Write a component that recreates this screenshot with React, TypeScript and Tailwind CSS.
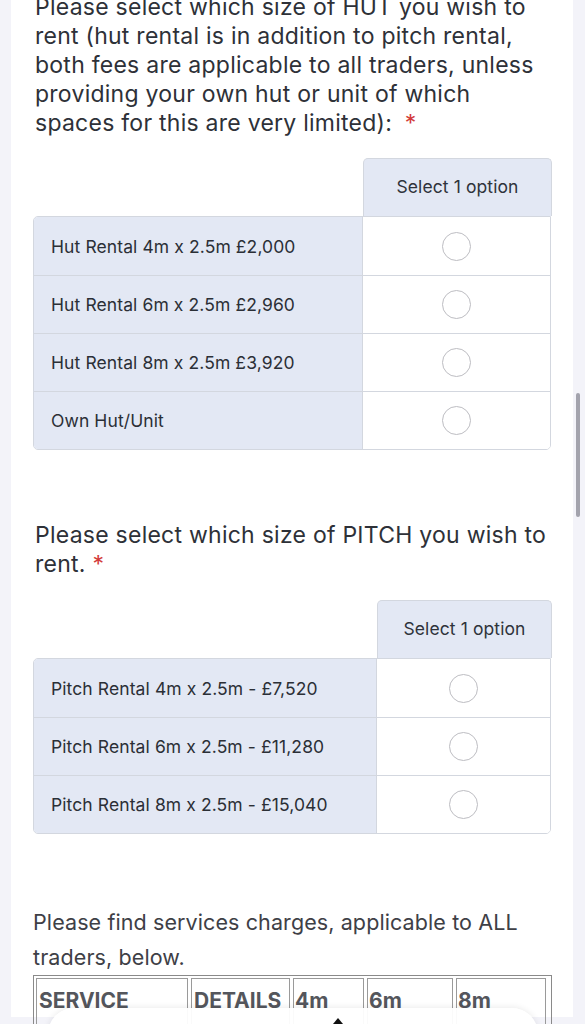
import React from "react";

const font = { fontFamily: "Inter, 'Noto Sans', sans-serif" };

function Radio() {
  return <div className="w-[29px] h-[29px] rounded-full border-[1.5px] border-[#bdbdc2] bg-white" />;
}

function OptionTable({ left, right, rows }: { left: number; right: number; rows: string[] }) {
  return (
    <div className="flex flex-col">
      <div className="flex">
        <div style={{ width: left }} className="shrink-0" />
        <div
          style={{ width: right }}
          className="h-[58px] shrink-0 bg-[#e3e8f4] border border-b-0 border-[#d3d7df] rounded-t-[5px] flex items-center justify-center text-[17.5px] tracking-[0.1px] text-[#2f333b]"
        >
          Select 1 option
        </div>
      </div>
      <div className="border border-[#d3d7df] rounded-[5px] rounded-tr-none overflow-hidden">
        {rows.map((r, i) => (
          <div key={i} className={`flex h-[58px] ${i > 0 ? "border-t border-[#d3d7df]" : ""}`}>
            <div
              style={{ width: left - 1 }}
              className="shrink-0 bg-[#e3e8f4] border-r border-[#d3d7df] flex items-center pl-[17px] pt-[2px] text-[17.5px] tracking-[0.1px] text-[#2b2f36]"
            >
              {r}
            </div>
            <div className="flex-1 flex items-center justify-center bg-white">
              <Radio />
            </div>
          </div>
        ))}
      </div>
    </div>
  );
}

export default function App() {
  return (
    <div style={font} className="relative w-[585px] h-[1024px] overflow-hidden bg-[#f3f3f9]">
      <div className="mx-[11px] w-[562px] h-full bg-white px-[22px]">
        <div className="mt-[-7px] pl-[2px] pr-[2px] text-[23px] leading-[29px] text-[#2e3138] tracking-[0.25px]">
          Please select which size of HUT you wish to rent (hut rental is in addition to pitch rental, both fees are
          applicable to all traders, unless providing your own hut or unit of which spaces for this are very limited):{" "}
          <span className="text-[#d33b3b] ml-[6px]">*</span>
        </div>
        <div className="mt-[20px]">
          <OptionTable
            left={330}
            right={189}
            rows={[
              "Hut Rental 4m x 2.5m £2,000",
              "Hut Rental 6m x 2.5m £2,960",
              "Hut Rental 8m x 2.5m £3,920",
              "Own Hut/Unit",
            ]}
          />
        </div>
        <div className="mt-[71px] pl-[2px] pr-[2px] text-[23px] leading-[29px] text-[#2e3138] tracking-[0.25px]">
          Please select which size of PITCH you wish to rent. <span className="text-[#d33b3b]">*</span>
        </div>
        <div className="mt-[21px]">
          <OptionTable
            left={344}
            right={175}
            rows={[
              "Pitch Rental 4m x 2.5m - £7,520",
              "Pitch Rental 6m x 2.5m - £11,280",
              "Pitch Rental 8m x 2.5m - £15,040",
            ]}
          />
        </div>
        <div className="mt-[71px] text-[21.5px] leading-[35px] tracking-[0.1px] text-[#3e4046]">
          Please find services charges, applicable to ALL traders, below.
        </div>
        <div className="mt-[0px] w-[519px] border border-[#8a8a8a] p-[2px]">
          <div className="flex gap-[3px] text-[21px] font-bold text-[#54565c] leading-[26px]">
            <div className="w-[152px] border border-[#9a9a9a] pt-[9px] pl-[2px] h-[60px]">SERVICE</div>
            <div className="w-[99px] border border-[#9a9a9a] pt-[9px] pl-[2px] h-[60px]">DETAILS</div>
            <div className="w-[71px] border border-[#9a9a9a] pt-[9px] pl-[1px] h-[60px]">4m</div>
            <div className="w-[86px] border border-[#9a9a9a] pt-[9px] pl-[1px] h-[60px]">6m</div>
            <div className="w-[90px] border border-[#9a9a9a] pt-[9px] pl-[1px] h-[60px]">8m</div>
          </div>
        </div>
      </div>
      {/* scrollbar */}
      <div className="absolute left-[576px] top-[393px] w-[4px] h-[124px] rounded-full bg-[#a3a3ad]" />
      {/* bottom floating bar */}
      <div className="absolute left-[48px] top-[1008px] w-[490px] h-[60px] rounded-[26px] bg-white/95 shadow-[0_-1px_6px_rgba(0,0,0,0.08)]">
        <svg className="absolute left-[283px] top-[10px]" width="14" height="10" viewBox="0 0 14 10">
          <path d="M7 0 L12 6 L2 6 Z" fill="#111" />
        </svg>
      </div>
    </div>
  );
}
